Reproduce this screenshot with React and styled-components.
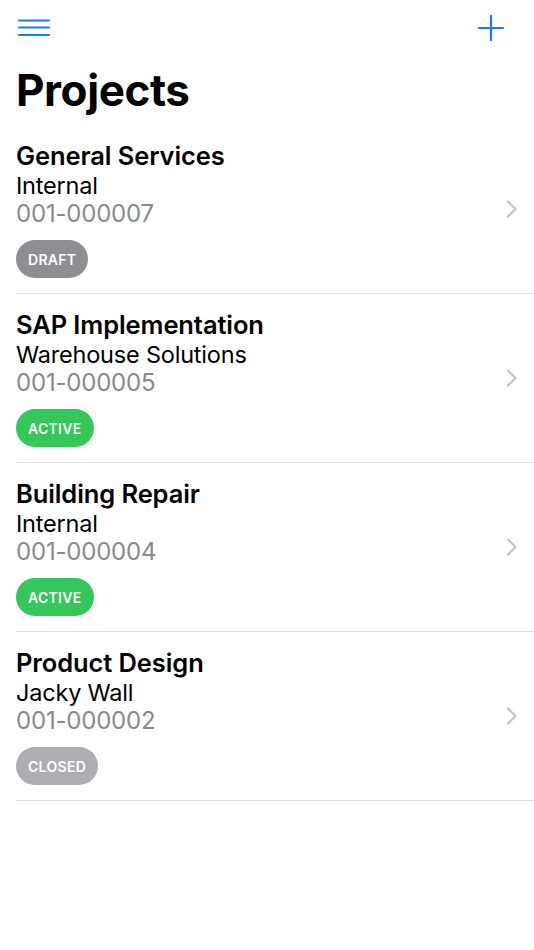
import React from "react";
import styled, { createGlobalStyle } from "styled-components";

const GlobalStyle = createGlobalStyle`
  html, body {
    margin: 0;
    padding: 0;
    background: #ffffff;
    font-family: Inter, "Noto Sans", "Liberation Sans", sans-serif;
    -webkit-font-smoothing: antialiased;
  }
`;

const projects = [
  { title: "General Services", client: "Internal", code: "001-000007", status: "draft" },
  { title: "SAP Implementation", client: "Warehouse Solutions", code: "001-000005", status: "active" },
  { title: "Building Repair", client: "Internal", code: "001-000004", status: "active" },
  { title: "Product Design", client: "Jacky Wall", code: "001-000002", status: "closed" },
];

const badgeColors = {
  draft: "#8e8e93",
  active: "#34c759",
  closed: "#aeaeb2",
};

const App = () => {
  return (
    <SPage>
      <GlobalStyle />
      <SNavBar>
        <SIconButton aria-label="menu">
          <svg width="32" height="18" viewBox="0 0 32 18">
            <g stroke="#1a7cf5" strokeWidth="2" strokeLinecap="round">
              <line x1="1" y1="1.5" x2="31" y2="1.5" />
              <line x1="1" y1="8.5" x2="31" y2="8.5" />
              <line x1="1" y1="16" x2="31" y2="16" />
            </g>
          </svg>
        </SIconButton>
        <SIconButton aria-label="add">
          <svg width="26" height="26" viewBox="0 0 26 26">
            <g stroke="#1a7cf5" strokeWidth="2.2" strokeLinecap="round">
              <line x1="13" y1="1" x2="13" y2="25" />
              <line x1="1" y1="13" x2="25" y2="13" />
            </g>
          </svg>
        </SIconButton>
      </SNavBar>
      <STitle>Projects</STitle>
      <SList>
        {projects.map((p) => (
          <SRow key={p.code}>
            <SInfo>
              <SRowTitle>{p.title}</SRowTitle>
              <SClient>{p.client}</SClient>
              <SCode>{p.code}</SCode>
              <SBadge $color={badgeColors[p.status]}>{p.status}</SBadge>
            </SInfo>
            <SChevron width="12" height="18" viewBox="0 0 12 18">
              <polyline
                points="2,1.5 9.5,9 2,16.5"
                fill="none"
                stroke="#c4c4c7"
                strokeWidth="2.2"
                strokeLinecap="round"
                strokeLinejoin="round"
              />
            </SChevron>
          </SRow>
        ))}
      </SList>
    </SPage>
  );
};

export default App;

const SPage = styled.div`
  width: 534px;
  min-height: 950px;
  background: #ffffff;
`;

const SNavBar = styled.div`
  display: flex;
  align-items: center;
  justify-content: space-between;
  height: 55px;
  padding: 0 30px 0 18px;
  box-sizing: border-box;
`;

const SIconButton = styled.button`
  display: flex;
  align-items: center;
  justify-content: center;
  border: none;
  background: none;
  padding: 0;
  cursor: pointer;
`;

const STitle = styled.h1`
  margin: 0;
  padding: 0 16px;
  height: 70px;
  display: flex;
  align-items: center;
  font-size: 44px;
  font-weight: 700;
  letter-spacing: -0.4px;
  color: #000000;
`;

const SList = styled.div`
  display: flex;
  flex-direction: column;
  padding-left: 16px;
`;

const SRow = styled.div`
  display: flex;
  align-items: center;
  padding: 15px 16px 15px 0;
  border-bottom: 1px solid #dedede;
`;

const SInfo = styled.div`
  display: flex;
  flex-direction: column;
  align-items: flex-start;
  flex: 1;
`;

const SRowTitle = styled.div`
  font-size: 25.5px;
  line-height: 32px;
  font-weight: 600;
  color: #000000;
  letter-spacing: -0.1px;
`;

const SClient = styled.div`
  font-size: 23.5px;
  line-height: 28px;
  color: #000000;
  letter-spacing: -0.2px;
`;

const SCode = styled.div`
  font-size: 24px;
  line-height: 28px;
  color: #8a8a8e;
  letter-spacing: -0.2px;
`;

const SBadge = styled.div`
  margin-top: 12px;
  height: 38px;
  padding: 0 12px;
  display: flex;
  align-items: center;
  border-radius: 19px;
  background: ${(p) => p.$color};
  color: #ffffff;
  font-size: 14px;
  font-weight: 600;
  letter-spacing: 0.3px;
  text-transform: uppercase;
`;

const SChevron = styled.svg`
  flex-shrink: 0;
`;
